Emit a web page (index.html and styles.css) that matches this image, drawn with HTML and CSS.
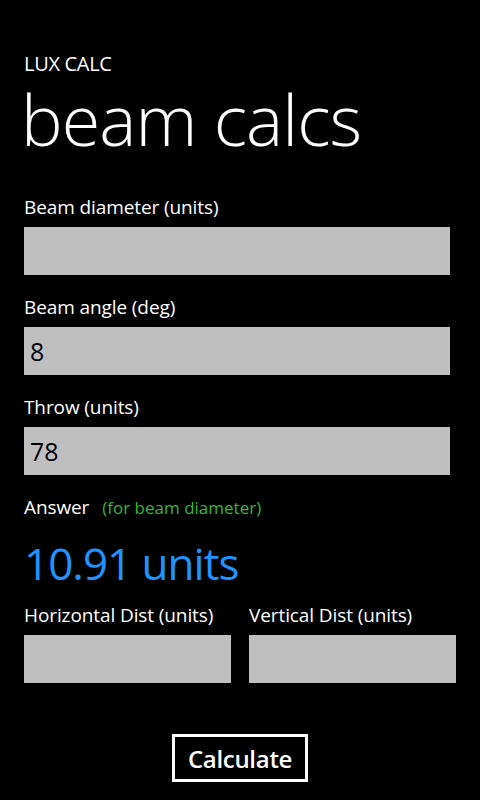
FILE: index.html
```html
<!DOCTYPE html>
<html lang="en">
<head>
<meta charset="utf-8">
<title>Lux Calc - beam calcs</title>
<link rel="stylesheet" href="styles.css">
</head>
<body>
<div class="page">
  <div class="app-title">LUX CALC</div>
  <h1 class="page-title">beam calcs</h1>

  <div class="field">
    <label class="label">Beam diameter (units)</label>
    <input class="box" type="text" value="">
  </div>
  <div class="field">
    <label class="label">Beam angle (deg)</label>
    <input class="box" type="text" value="8">
  </div>
  <div class="field">
    <label class="label">Throw (units)</label>
    <input class="box" type="text" value="78">
  </div>

  <div class="answer-row">
    <span class="label">Answer</span>
    <span class="note">(for beam diameter)</span>
  </div>
  <div class="answer">10.91 units</div>

  <div class="split">
    <div class="col">
      <label class="label">Horizontal Dist (units)</label>
      <input class="box" type="text" value="">
    </div>
    <div class="col">
      <label class="label">Vertical Dist (units)</label>
      <input class="box" type="text" value="">
    </div>
  </div>

  <div class="actions">
    <button class="btn" type="button">Calculate</button>
  </div>
</div>
</body>
</html>
```
FILE: styles.css
```css
html, body {
  margin: 0;
  padding: 0;
  background: #000;
}
body {
  width: 480px;
  height: 800px;
  overflow: hidden;
  color: #fff;
  font-family: "Open Sans", "Noto Sans", sans-serif;
}
.page {
  padding: 52px 24px 0 24px;
}
.app-title {
  font-size: 20px;
  letter-spacing: -0.3px;
  line-height: 24px;
  height: 24px;
  margin-bottom: 7px;
}
.page-title {
  margin: 0 0 36px -3px;
  font-size: 70px;
  letter-spacing: -0.9px;
  font-weight: 300;
  line-height: 72px;
  height: 76px;
}
.field {
  display: flex;
  flex-direction: column;
  margin-bottom: 20px;
}
.label {
  display: block;
  font-size: 19px;
  letter-spacing: -0.1px;
  line-height: 24px;
  height: 24px;
  margin-bottom: 8px;
}
.box {
  display: block;
  box-sizing: border-box;
  width: 426px;
  height: 48px;
  margin: 0;
  padding: 0 6px;
  border: none;
  outline: none;
  background: #bfbfbf;
  color: #000;
  font-family: "Open Sans", "Noto Sans", sans-serif;
  font-size: 25px;
}
.answer-row {
  display: flex;
  align-items: baseline;
  gap: 13px;
  height: 24px;
  margin-bottom: 16px;
}
.answer-row .label {
  margin-bottom: 0;
}
.note {
  color: #33b833;
  font-size: 17px;
  line-height: 24px;
}
.answer {
  color: #1f93ff;
  font-size: 44px;
  letter-spacing: -1px;
  line-height: 56px;
  height: 56px;
  margin-bottom: 12px;
}
.split {
  display: flex;
  gap: 18px;
}
.col {
  display: flex;
  flex-direction: column;
}
.col .box {
  width: 207px;
}
.actions {
  display: flex;
  justify-content: center;
  margin-top: 51px;
}
.btn {
  box-sizing: border-box;
  width: 136px;
  height: 48px;
  margin: 0;
  padding: 0;
  border: 3px solid #fff;
  background: #000;
  color: #fff;
  font-family: "Open Sans", "Noto Sans", sans-serif;
  font-size: 24px;
  font-weight: 600;
  letter-spacing: -0.3px;
}
```
